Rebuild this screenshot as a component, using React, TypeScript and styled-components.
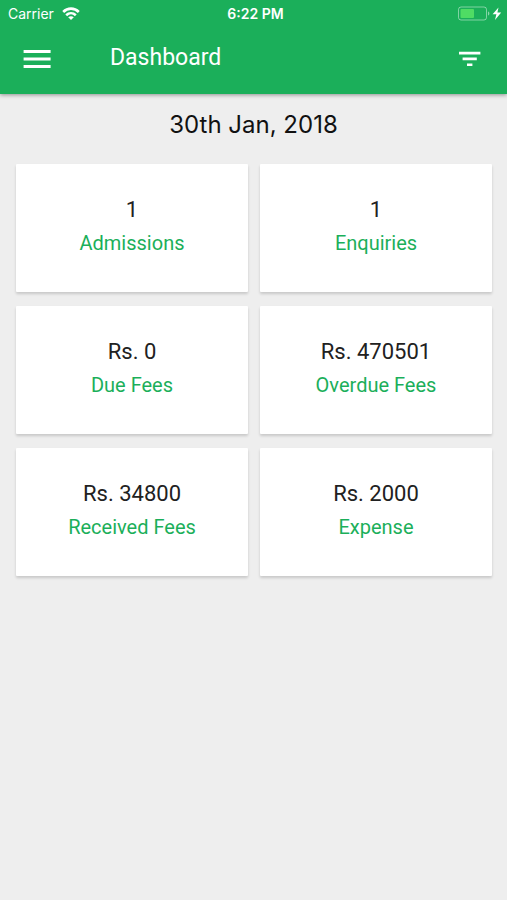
import React from 'react';
import styled, { createGlobalStyle } from 'styled-components';

const GlobalStyle = createGlobalStyle`
  *, *::before, *::after { box-sizing: border-box; }
  body { margin: 0; background: #eeeeee; font-family: Roboto, sans-serif; }
`;

const Page = styled.div`
  min-height: 100vh;
  background: #eeeeee;
`;

const Header = styled.header`
  background: #1baf5a;
  color: #ffffff;
  box-shadow: 0 1px 4px rgba(0, 0, 0, 0.4);
`;

const StatusBar = styled.div`
  display: grid;
  grid-template-columns: 1fr auto 1fr;
  align-items: center;
  height: 27px;
  padding: 0 4px 0 8px;
  font-family: Inter, sans-serif;
  font-size: 14px;
  line-height: 20px;
`;

const Carrier = styled.div`
  display: flex;
  align-items: center;
  gap: 8px;
`;

const Clock = styled.time`
  font-weight: 600;
`;

const Power = styled.div`
  display: flex;
  align-items: center;
  justify-content: flex-end;
`;

const Toolbar = styled.div`
  display: flex;
  align-items: center;
  height: 67px;
  padding: 0 22px 3px;
`;

const IconButton = styled.button`
  display: flex;
  padding: 0;
  border: 0;
  background: none;
  color: inherit;
  cursor: pointer;
`;

const Title = styled.h1`
  flex: 1;
  margin: 0;
  padding: 0 0 2px 58px;
  font-size: 23px;
  line-height: 32px;
  font-weight: 400;
`;

const Day = styled.h2`
  margin: 0;
  padding: 15px 0 23px;
  color: #111111;
  font-family: Inter, sans-serif;
  font-size: 24px;
  line-height: 32px;
  font-weight: 400;
  text-align: center;
`;

const Grid = styled.main`
  display: grid;
  grid-template-columns: 1fr 1fr;
  gap: 14px 12px;
  padding: 0 15px 16px 16px;
`;

const Card = styled.section`
  display: flex;
  flex-direction: column;
  align-items: center;
  min-height: 128px;
  padding-top: 30px;
  border-radius: 1px;
  background: #ffffff;
  box-shadow: 0 2px 3px rgba(0, 0, 0, 0.16);
`;

const Value = styled.strong`
  color: #212121;
  font-size: 22px;
  line-height: 32px;
  font-weight: 400;
`;

const Label = styled.span`
  color: #1baf5a;
  font-size: 20px;
  line-height: 34px;
`;

const stats = [
  { value: '1', label: 'Admissions' },
  { value: '1', label: 'Enquiries' },
  { value: 'Rs. 0', label: 'Due Fees' },
  { value: 'Rs. 470501', label: 'Overdue Fees' },
  { value: 'Rs. 34800', label: 'Received Fees' },
  { value: 'Rs. 2000', label: 'Expense' },
];

export default function App() {
  return (
    <Page>
      <GlobalStyle />
      <Header>
        <StatusBar>
          <Carrier>
            Carrier
            <svg width="18" height="13" viewBox="0 0 18 13" fill="none" stroke="#fff" strokeWidth="2.6" aria-hidden="true">
              <path d="M1.2 5C5.6.5 12.4.5 16.8 5" />
              <path d="M4.2 8.2C7 5.5 11 5.5 13.8 8.2" />
              <path d="M9 13 6.2 10.2c1.7-1.4 3.9-1.4 5.6 0z" fill="#fff" stroke="none" />
            </svg>
          </Carrier>
          <Clock>6:22 PM</Clock>
          <Power>
            <svg width="45" height="15" viewBox="0 0 45 15" aria-hidden="true">
              <rect x="0.5" y="1" width="28" height="13" rx="2.5" fill="none" stroke="#fff" strokeOpacity="0.45" />
              <rect x="2.5" y="3" width="13.5" height="9" rx="1" fill="#4fdc64" />
              <path d="M30 5.5c1.8.5 1.8 3.5 0 4z" fill="#fff" fillOpacity="0.5" />
              <path d="M40.5 1.5 34.6 8.3h3.8L37 14 43.2 6.5h-3.8z" fill="#fff" />
            </svg>
          </Power>
        </StatusBar>
        <Toolbar>
          <IconButton aria-label="Open menu">
            <svg width="30" height="24" viewBox="0 0 30 24" fill="#fff" aria-hidden="true">
              <path d="M1.6 3h27v3h-27zM1.6 10.4h27v3h-27zM1.6 18h27v3h-27z" />
            </svg>
          </IconButton>
          <Title>Dashboard</Title>
          <IconButton aria-label="Filter">
            <svg width="30" height="24" viewBox="0 0 30 24" fill="#fff" aria-hidden="true">
              <path d="M4 4.8h21.4v2.6H4zM7.6 10.6h14.2v2.6H7.6zM12 16.4h5.4V19H12z" />
            </svg>
          </IconButton>
        </Toolbar>
      </Header>
      <Day>30th Jan, 2018</Day>
      <Grid>
        {stats.map((s) => (
          <Card key={s.label}>
            <Value>{s.value}</Value>
            <Label>{s.label}</Label>
          </Card>
        ))}
      </Grid>
    </Page>
  );
}
